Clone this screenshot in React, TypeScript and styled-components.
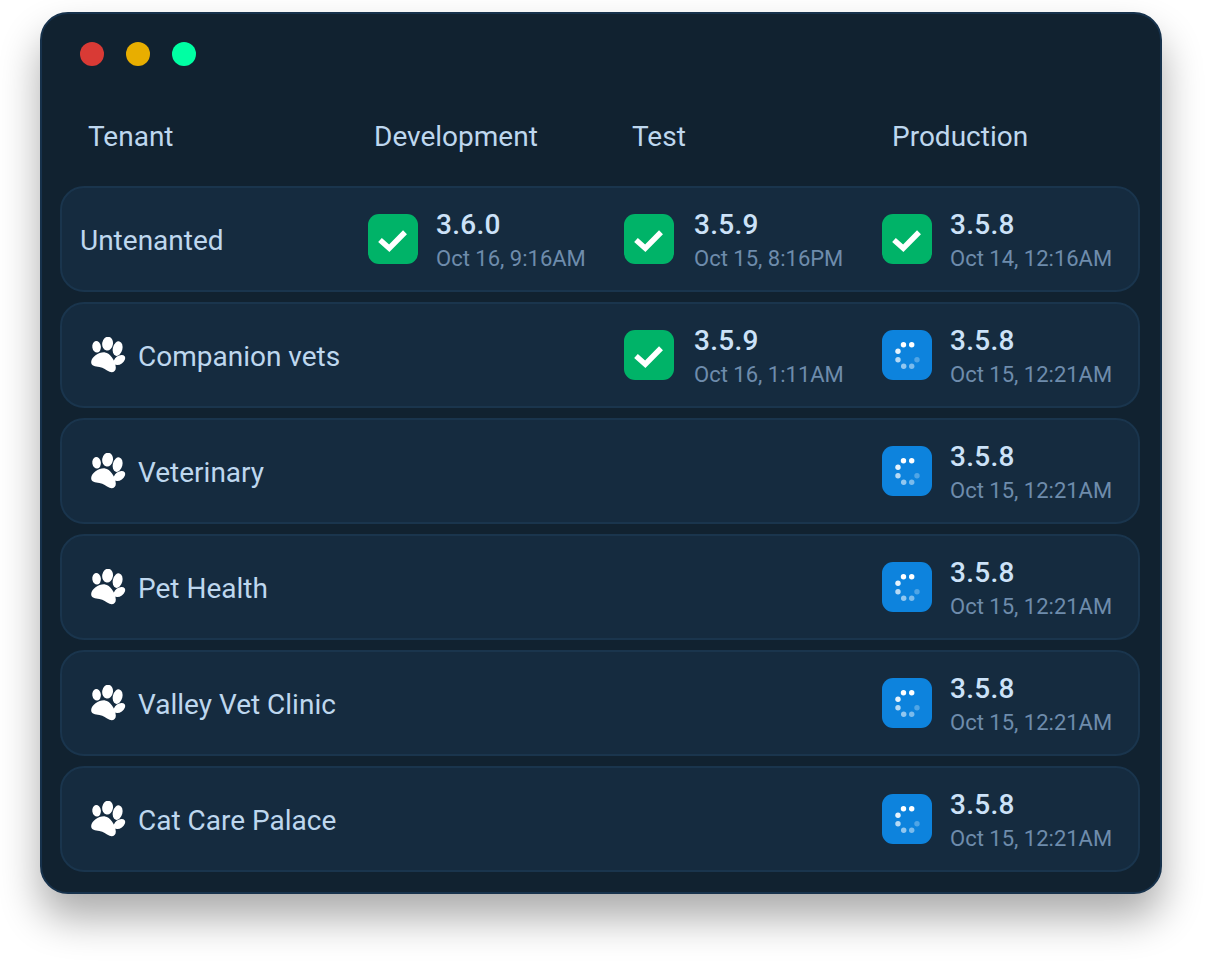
import React, { FC } from 'react';
import styled, { createGlobalStyle } from 'styled-components';

const GlobalStyle = createGlobalStyle`
    html, body {
        margin: 0;
        background: #fff;
        font-family: Roboto, "Liberation Sans", sans-serif;
    }
`;

const Page = styled.div`
    width: 1232px;
    height: 962px;
    padding: 12px 0 0 40px;
    box-sizing: border-box;
    overflow: hidden;
`;

const Window = styled.div`
    width: 1122px;
    height: 882px;
    box-sizing: border-box;
    padding: 0 20px 0 18px;
    background: #112230;
    border: 2px solid #17324c;
    border-radius: 28px;
    box-shadow: 0 24px 40px rgba(0, 0, 0, 0.33);
`;

const TitleBar = styled.div`
    display: flex;
    gap: 22px;
    padding: 28px 0 0 20px;
    height: 52px;
`;

const Light = styled.span<{ $color: string }>`
    width: 24px;
    height: 24px;
    border-radius: 50%;
    background: ${(p) => p.$color};
`;

const HeaderRow = styled.div`
    display: grid;
    grid-template-columns: 286px 258px 260px 1fr;
    height: 92px;
    box-sizing: border-box;
    padding: 0 0 6px 28px;
    align-items: center;
    color: #bed7ee;
    font-size: 28px;
    line-height: 32px;
`;

const Rows = styled.div`
    display: flex;
    flex-direction: column;
    gap: 10px;
`;

const Row = styled.div`
    display: grid;
    grid-template-columns: 288px 256px 258px 1fr;
    align-items: center;
    height: 106px;
    box-sizing: border-box;
    padding-left: 18px;
    background: #152b3f;
    border: 2px solid #1a354d;
    border-radius: 24px;
`;

const Name = styled.div<{ $indent?: boolean }>`
    display: flex;
    align-items: center;
    gap: 11px;
    padding-left: ${(p) => (p.$indent ? '11px' : '0')};
    color: #bed7ee;
    font-size: 28px;
    line-height: 32px;
`;

const NameText = styled.span`
    padding-top: 4px;
`;

const Cell = styled.div<{ $gap: number }>`
    display: flex;
    align-items: center;
    gap: ${(p) => p.$gap}px;
`;

const Badge = styled.div<{ $color: string }>`
    flex: none;
    width: 50px;
    height: 50px;
    border-radius: 11px;
    background: ${(p) => p.$color};
`;

const Info = styled.div`
    padding-top: 2px;
`;

const Version = styled.div`
    color: #cce2f8;
    font-size: 28px;
    font-weight: 500;
    line-height: 32px;
    letter-spacing: 0.3px;
`;

const Date = styled.div`
    margin-top: 5px;
    color: #6e8cac;
    font-size: 22px;
    line-height: 26px;
`;

const Paw: FC = () => (
    <svg width="36" height="36" viewBox="0 0 36 36" fill="#fff">
        <ellipse cx="5.6" cy="9.8" rx="4.3" ry="5.8" transform="rotate(-8 5.6 9.8)" />
        <ellipse cx="16.6" cy="6.6" rx="5.4" ry="6.9" transform="rotate(8 16.6 6.6)" />
        <ellipse cx="26.6" cy="11.6" rx="4.8" ry="7.4" transform="rotate(14 26.6 11.6)" />
        <ellipse cx="28.4" cy="23" rx="4.2" ry="6.4" transform="rotate(55 28.4 23)" />
        <path d="M0.2 24.8C0.6 20 8 14.8 14 15.4C19 15.8 24.6 24 24.8 30.4C25 34.4 21.8 36 18.6 34.8C15 33.4 12.6 30.6 8.4 30C4 29.4 -0.2 28.8 0.2 24.8Z" />
    </svg>
);

const Check: FC = () => (
    <svg width="50" height="50" viewBox="0 0 50 50" fill="none">
        <path d="M12 26L21.3 34.3L37 18.3" stroke="#fff" strokeWidth="5.5" />
    </svg>
);

const spinnerDots: [number, number, number][] = [
    [21.5, 14.7, 1],
    [29.7, 14.7, 1],
    [16, 21.3, 0.9],
    [16, 29.7, 0.7],
    [21.7, 36.3, 0.55],
    [29.7, 36.3, 0.45],
    [35, 29.7, 0.28],
];

const Spinner: FC = () => (
    <svg width="50" height="50" viewBox="0 0 50 50">
        {spinnerDots.map(([cx, cy, opacity]) => (
            <circle key={`${cx}-${cy}`} cx={cx} cy={cy} r="2.7" fill="#fff" opacity={opacity} />
        ))}
    </svg>
);

type Deploy = { version: string; date: string; running?: boolean };

const Deployment: FC<{ deploy?: Deploy; gap?: number }> = ({ deploy, gap = 18 }) => {
    if (!deploy) return <div />;
    return (
        <Cell $gap={gap}>
            <Badge $color={deploy.running ? '#0d83dd' : '#00b368'}>{deploy.running ? <Spinner /> : <Check />}</Badge>
            <Info>
                <Version>{deploy.version}</Version>
                <Date>{deploy.date}</Date>
            </Info>
        </Cell>
    );
};

const running: Deploy = { version: '3.5.8', date: 'Oct 15, 12:21AM', running: true };

const tenants: { name: string; paw?: boolean; dev?: Deploy; test?: Deploy; prod: Deploy }[] = [
    {
        name: 'Untenanted',
        dev: { version: '3.6.0', date: 'Oct 16, 9:16AM' },
        test: { version: '3.5.9', date: 'Oct 15, 8:16PM' },
        prod: { version: '3.5.8', date: 'Oct 14, 12:16AM' },
    },
    { name: 'Companion vets', paw: true, test: { version: '3.5.9', date: 'Oct 16, 1:11AM' }, prod: running },
    { name: 'Veterinary', paw: true, prod: running },
    { name: 'Pet Health', paw: true, prod: running },
    { name: 'Valley Vet Clinic', paw: true, prod: running },
    { name: 'Cat Care Palace', paw: true, prod: running },
];

const App: FC = () => (
    <Page>
        <GlobalStyle />
        <Window>
            <TitleBar>
                <Light $color="#d93a35" />
                <Light $color="#e8ae00" />
                <Light $color="#00ffa3" />
            </TitleBar>
            <HeaderRow>
                <span>Tenant</span>
                <span>Development</span>
                <span>Test</span>
                <span>Production</span>
            </HeaderRow>
            <Rows>
                {tenants.map((t) => (
                    <Row key={t.name}>
                        <Name $indent={t.paw}>
                            {t.paw && <Paw />}
                            <NameText>{t.name}</NameText>
                        </Name>
                        <Deployment deploy={t.dev} />
                        <Deployment deploy={t.test} gap={20} />
                        <Deployment deploy={t.prod} />
                    </Row>
                ))}
            </Rows>
        </Window>
    </Page>
);

export default App;
